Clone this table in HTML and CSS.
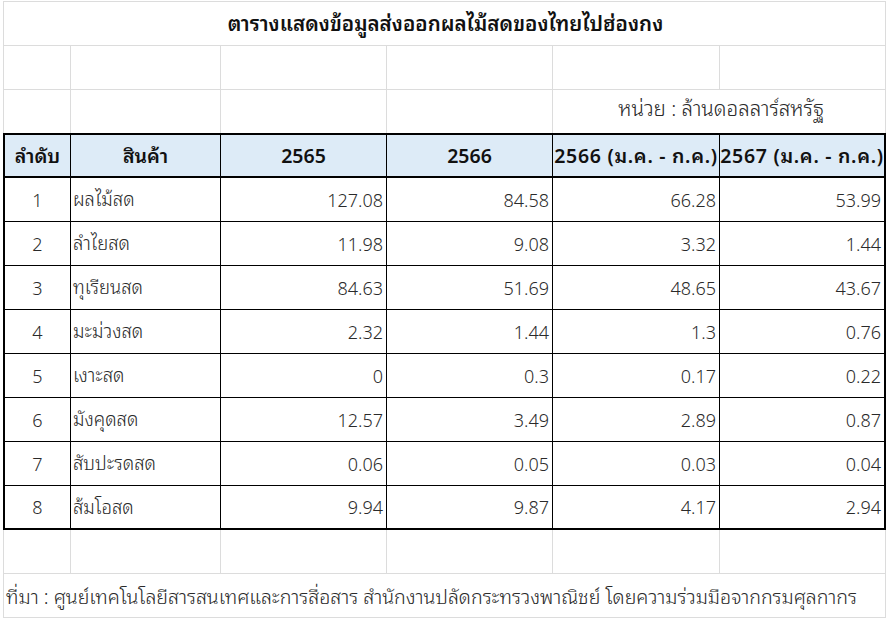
FILE: index.html
```html
<!DOCTYPE html>
<html lang="th">
<head>
<meta charset="utf-8">
<title>ตารางแสดงข้อมูลส่งออกผลไม้สดของไทยไปฮ่องกง</title>
<link rel="stylesheet" href="styles.css">
</head>
<body>
<div class="sheet">
  <div class="row title-row"><div class="cell span-all title">ตารางแสดงข้อมูลส่งออกผลไม้สดของไทยไปฮ่องกง</div></div>
  <div class="row grid-row">
    <div class="cell first"></div><div class="cell"></div><div class="cell"></div><div class="cell"></div><div class="cell"></div><div class="cell"></div>
  </div>
  <div class="row grid-row unit-row">
    <div class="cell first"></div><div class="cell"></div><div class="cell"></div><div class="cell"></div><div class="cell span-2 unit">หน่วย : ล้านดอลลาร์สหรัฐ</div>
  </div>
  <div class="tbl">
    <div class="trow head">
      <div class="td c">ลำดับ</div><div class="td c">สินค้า</div><div class="td c">2565</div><div class="td c">2566</div><div class="td c wide">2566 (ม.ค. - ก.ค.)</div><div class="td c wide">2567 (ม.ค. - ก.ค.)</div>
    </div>
    <div class="trow"><div class="td c">1</div><div class="td l">ผลไม้สด</div><div class="td r">127.08</div><div class="td r">84.58</div><div class="td r">66.28</div><div class="td r">53.99</div></div>
    <div class="trow"><div class="td c">2</div><div class="td l">ลำไยสด</div><div class="td r">11.98</div><div class="td r">9.08</div><div class="td r">3.32</div><div class="td r">1.44</div></div>
    <div class="trow"><div class="td c">3</div><div class="td l">ทุเรียนสด</div><div class="td r">84.63</div><div class="td r">51.69</div><div class="td r">48.65</div><div class="td r">43.67</div></div>
    <div class="trow"><div class="td c">4</div><div class="td l">มะม่วงสด</div><div class="td r">2.32</div><div class="td r">1.44</div><div class="td r">1.3</div><div class="td r">0.76</div></div>
    <div class="trow"><div class="td c">5</div><div class="td l">เงาะสด</div><div class="td r">0</div><div class="td r">0.3</div><div class="td r">0.17</div><div class="td r">0.22</div></div>
    <div class="trow"><div class="td c">6</div><div class="td l">มังคุดสด</div><div class="td r">12.57</div><div class="td r">3.49</div><div class="td r">2.89</div><div class="td r">0.87</div></div>
    <div class="trow"><div class="td c">7</div><div class="td l">สับปะรดสด</div><div class="td r">0.06</div><div class="td r">0.05</div><div class="td r">0.03</div><div class="td r">0.04</div></div>
    <div class="trow last"><div class="td c">8</div><div class="td l">ส้มโอสด</div><div class="td r">9.94</div><div class="td r">9.87</div><div class="td r">4.17</div><div class="td r">2.94</div></div>
  </div>
  <div class="row grid-row">
    <div class="cell first"></div><div class="cell"></div><div class="cell"></div><div class="cell"></div><div class="cell"></div><div class="cell"></div>
  </div>
  <div class="row source-row"><div class="cell span-all first source">ที่มา : ศูนย์เทคโนโลยีสารสนเทศและการสื่อสาร สำนักงานปลัดกระทรวงพาณิชย์ โดยความร่วมมือจากกรมศุลกากร</div></div>
</div>
</body>
</html>
```
FILE: styles.css
```css
* { box-sizing: border-box; }
html, body { margin: 0; padding: 0; background: #fff; }
body {
  font-family: "Noto Sans", "Noto Sans Thai Looped", "Noto Sans Thai", sans-serif;
  font-size: 18px;
  font-weight: 300;
  color: #2a2a2a;
}
.sheet {
  margin: 1px 0 0 3px;
  width: 883px;
  border-top: 1px solid #dcdcdc;
}
.row {
  display: grid;
  grid-template-columns: 68px 150px 166px 166px 167px 166px;
  height: 44px;
}
.cell {
  border-right: 1px solid #dcdcdc;
  border-bottom: 1px solid #dcdcdc;
  display: flex;
  align-items: center;
  white-space: nowrap;
  line-height: 1;
}
.cell.first { border-left: 1px solid #dcdcdc; }
.span-all { grid-column: 1 / -1; }
.span-2 { grid-column: 5 / 7; }
.title-row .cell { border-left: 1px solid #dcdcdc; }
.title {
  justify-content: center;
  font-weight: 600;
  font-size: 20.5px;
  color: #111;
  padding-left: 2px;
}
.unit-row { height: 43px; }
.unit-row .cell { border-bottom: none; }
.unit {
  justify-content: center;
  padding-bottom: 6px;
  font-size: 20.6px;
  padding-left: 4px;
}
.tbl {
  border: 2px solid #000;
  width: 883px;
}
.trow {
  display: grid;
  grid-template-columns: 66px 150px 166px 166px 167px 164px;
  height: 44px;
  border-bottom: 1px solid #000;
}
.trow.head {
  height: 43px;
  border-bottom: 2px solid #000;
  background: #ddebf7;
  font-weight: 600;
  font-size: 19.5px;
  color: #111;
}
.trow.last { height: 42px; border-bottom: none; }
.td {
  border-right: 1px solid #000;
  display: flex;
  align-items: center;
  white-space: nowrap;
  line-height: 1;
  overflow: visible;
}
.td:last-child { border-right: none; }
.td.c { justify-content: center; }
.td.wide { letter-spacing: 0.7px; }
.td.l { justify-content: flex-start; padding-left: 2px; font-size: 18.5px; }
.td.r { justify-content: flex-end; padding-right: 3px; }
.source-row .cell { border-right: 1px solid #dcdcdc; }
.source {
  align-items: flex-end;
  padding: 0 0 10px 2px;
  font-size: 19.6px;
}
```
